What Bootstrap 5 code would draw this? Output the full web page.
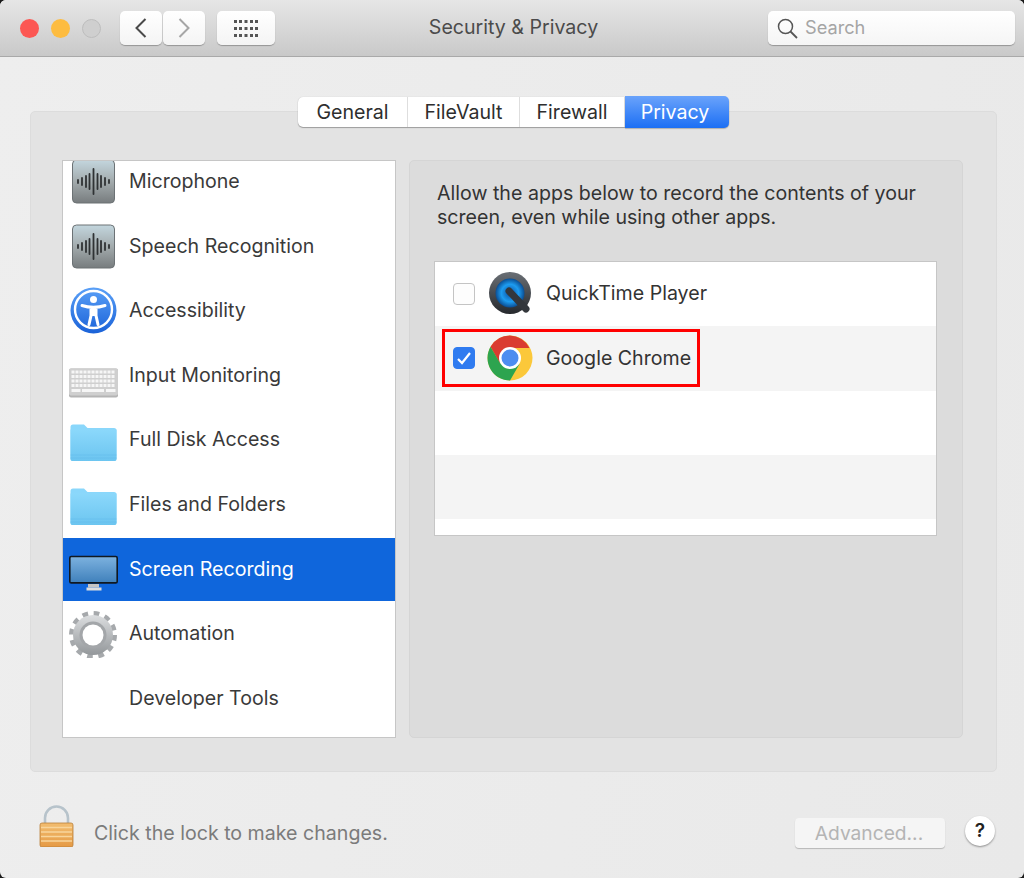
<!DOCTYPE html>
<html lang="en">
<head>
<meta charset="utf-8">
<title>Security &amp; Privacy</title>
<link href="https://cdn.jsdelivr.net/npm/bootstrap@5.3.0/dist/css/bootstrap.min.css" rel="stylesheet">
<style>
html,body{height:100%;}
body{background:#1a1a1a;font-family:Inter,"Liberation Sans",sans-serif;font-size:19.6px;color:#333;overflow:hidden;}
.win{width:1024px;height:878px;background:linear-gradient(100deg,#eeeeee,#e9e9e9);border-radius:6px;overflow:hidden;}
.tbar{height:57px;background:linear-gradient(#e6e6e6,#c9c9c9);border-bottom:1px solid #a9a9a9;padding:0 9px 0 20px;}
.light{width:19px;height:19px;border-radius:50%;}
.l-red{background:#fc5753;margin-right:12px;}
.l-yel{background:#fdbc40;margin-right:12px;}
.l-off{background:#cfcfcf;border:1px solid #bdbdbd;margin-right:19px;}
.tbtn{height:34px;background:linear-gradient(#fff,#f4f4f4);border:0;border-radius:5px;box-shadow:0 1px 1px rgba(0,0,0,.28);padding:0;}
.t-nav{width:42px;margin-right:1px;}
.t-grid{width:58px;margin-left:11px;}
.ttl{font-size:19.6px;color:#4b4b4b;padding-right:16px;}
.srch{width:247px;height:34px;background:linear-gradient(#fff,#f5f5f5);border-radius:5px;box-shadow:0 1px 1px rgba(0,0,0,.28);padding-left:9px;color:#a5a5a5;font-size:18.2px;gap:7px;}
.tabsw{margin-top:40px;margin-bottom:-16px;margin-left:3px;position:relative;z-index:2;}
.tabg{background:#fff;border-radius:5px;box-shadow:0 1px 1px rgba(0,0,0,.3),0 0 1px rgba(0,0,0,.2);height:30px;}
.tabb{height:30px;line-height:30px;padding:0;border-right:1px solid #dedede;color:#2e2e2e;text-align:center;}
.tb1{width:110px}.tb2{width:112px}.tb3{width:105px}
.tb4{width:104px;padding-right:4px;border:0;color:#fff;border-radius:0 5px 5px 0;background:linear-gradient(#6aa3fb,#1c6ff4);margin-top:-1px;height:32px;line-height:32px;box-shadow:0 1px 1px rgba(0,0,0,.2);}
.grp{margin:0 27px 0 30px;height:661px;background:#e3e3e3;border:1px solid #dcdcdc;border-radius:5px;padding:48px 33px 33px 31px;gap:13px;}
.plist{width:334px;background:#fff;border:1px solid #c6c6c6;overflow:hidden;flex:none;}
.prow{height:64.6px;border-top:1px solid #fff;border-bottom:1px solid #fff;padding-left:6px;gap:11px;color:#3a3a3a;flex:none;}
.prow:first-child{margin-top:-11.5px;}
.prow.sel{background:#0f66dc;color:#fff;}
.pico{width:49px;height:49px;flex:none;display:block;}
.rpane{width:553px;background:#dcdcdc;border:1px solid #d5d5d5;border-radius:5px;padding:20px 25px 0 24px;}
.rtxt{line-height:24px;margin:0 0 32px 3px;color:#333;}
.atbl{background:#fff;border:1px solid #c6c6c6;height:275px;overflow:hidden;}
.arow{height:64.3px;padding-left:7px;flex:none;}
.arow.alt{background:#f4f4f4;}
.plain{padding-left:11px;}
.hilite{border:3px solid #f00;height:58px;width:258px;padding:0 0 0 8px;}
.cbx{width:22px;height:22px;border-radius:4px;background:#fdfdfd;border:1px solid #c4c4c4;flex:none;margin-right:12px;}
.cbx.on{background:#2f7bf0;border-color:#2f7bf0;}
.aico{width:46px;height:46px;flex:none;margin-right:13px;}
.foot{padding:0 29px 0 38px;height:106px;}
.ftxt{color:#7b7b7b;margin-left:20px;margin-top:17px;}
.advb{width:150px;height:30px;background:#f5f5f5;border:0;border-radius:4px;box-shadow:0 1px 1px rgba(0,0,0,.22);color:#b4b4b4;margin-top:15px;padding:0 2px 0 0;font-size:19.2px;line-height:28px;}
.hbtn{width:30px;height:30px;border-radius:50%;background:#fff;border:0;box-shadow:0 1px 2px rgba(0,0,0,.4);margin-left:20px;margin-top:12px;padding:0;color:#222;font-weight:600;font-size:19px;line-height:30px;}
</style>
</head>
<body>
<svg width="0" height="0" class="position-absolute">
<defs>
<linearGradient id="gm" x1="0" y1="0" x2="0" y2="1"><stop offset="0" stop-color="#c3d6de"/><stop offset=".5" stop-color="#a3abad"/><stop offset="1" stop-color="#777c7e"/></linearGradient>
<linearGradient id="gf" x1="0" y1="0" x2="0" y2="1"><stop offset="0" stop-color="#8bd8fb"/><stop offset="1" stop-color="#6cc5f0"/></linearGradient>
<linearGradient id="gs" x1="0" y1="0" x2="0" y2="1"><stop offset="0" stop-color="#7db2df"/><stop offset="1" stop-color="#3f80bb"/></linearGradient>
<linearGradient id="ga" x1="0" y1="0" x2="0" y2="1"><stop offset="0" stop-color="#5aa0f7"/><stop offset="1" stop-color="#1a62d8"/></linearGradient>
<linearGradient id="gg" x1="0" y1="0" x2="0" y2="1"><stop offset="0" stop-color="#dcdee0"/><stop offset="1" stop-color="#93979a"/></linearGradient>
<linearGradient id="gl" x1="0" y1="0" x2="0" y2="1"><stop offset="0" stop-color="#f2bd70"/><stop offset="1" stop-color="#e59a45"/></linearGradient>
<symbol id="i-mic" viewBox="0 0 49 49">
<rect x="3.500" y="3" width="42" height="43" rx="4" fill="url(#gm)" stroke="#6c7275"/>
<path d="M9 23v3M13 21v7M17 19v11M20.500 17v15M24.500 12v25M28.500 17v15M32 19v11M36 21v7M40 23v3" stroke="#2f3234" stroke-width="1.800" stroke-linecap="round"/>
</symbol>
<symbol id="i-acc" viewBox="0 0 49 49">
<circle cx="24.500" cy="24.500" r="23" fill="url(#ga)"/>
<circle cx="24.500" cy="23.500" r="18.500" fill="none" stroke="#fff" stroke-width="2.400"/>
<circle cx="24.500" cy="13.500" r="3.500" fill="#fff"/>
<path d="M13 19.500c4 1.300 8 1.800 11.500 1.800s7.500-.5 11.500-1.800M22 21.500v8l-2 9M27 21.500v8l2 9" stroke="#fff" stroke-width="3" fill="none" stroke-linecap="round"/>
<path d="M22 21h5v9h-5z" fill="#fff"/>
</symbol>
<symbol id="i-key" viewBox="0 0 49 49">
<rect x="0" y="17.500" width="49" height="29" rx="2" fill="#b4b4b4"/>
<rect x="0" y="17.500" width="49" height="27" rx="2" fill="#cfcfcf"/>
<path d="M2.500 21h44M2.500 25.500h44M2.500 30h44M2.500 34.500h44" stroke="#f6f6f6" stroke-width="3" stroke-dasharray="3 1"/>
<path d="M2.500 39.500h9M13 39.500h22M37 39.500h9.500" stroke="#f6f6f6" stroke-width="3"/>
</symbol>
<symbol id="i-fold" viewBox="0 0 49 49">
<path d="M1.500 11a2.500 2.500 0 0 1 2.500-2.500h11l3.500 3.500H45a2.500 2.500 0 0 1 2.500 2.500V43a2 2 0 0 1-2 2h-42a2 2 0 0 1-2-2z" fill="#8ad7fb"/>
<path d="M1.500 13.500h46V43a2 2 0 0 1-2 2h-42a2 2 0 0 1-2-2z" fill="url(#gf)"/>
<path d="M1.500 39h46M1.500 42h46" stroke="#5fb8e6" stroke-opacity=".45"/>
</symbol>
<symbol id="i-mon" viewBox="0 0 49 49">
<rect x="0.800" y="11.500" width="47.400" height="26.400" rx="1.500" fill="url(#gs)" stroke="#101820" stroke-width="1.600"/>
<rect x="19" y="39" width="11" height="3.500" fill="#c5c5c5"/>
<rect x="17.500" y="42.500" width="15" height="3" fill="#dedede"/>
</symbol>
<symbol id="i-gear" viewBox="0 0 49 49">
<circle cx="24" cy="26" r="21.500" fill="none" stroke="#a6a9ac" stroke-width="5" stroke-dasharray="5.630 5.630"/>
<circle cx="24" cy="26" r="20" fill="url(#gg)"/>
<circle cx="24" cy="26" r="13.500" fill="#a3a6a9"/>
<circle cx="24" cy="26" r="10.500" fill="#fff"/>
</symbol>
</defs>
</svg>
<div class="win d-flex flex-column">
  <div class="tbar d-flex align-items-center">
    <span class="light l-red"></span><span class="light l-yel"></span><span class="light l-off"></span>
    <button class="tbtn t-nav d-flex align-items-center justify-content-center" type="button" aria-label="Back"><svg width="14" height="22" viewBox="0 0 14 22"><path d="M11.500 2 2.500 11l9 9" fill="none" stroke="#4a4a4a" stroke-width="2"/></svg></button>
    <button class="tbtn t-nav d-flex align-items-center justify-content-center" type="button" aria-label="Forward"><svg width="14" height="22" viewBox="0 0 14 22"><path d="M2.500 2l9 9-9 9" fill="none" stroke="#a6a6a6" stroke-width="2"/></svg></button>
    <button class="tbtn t-grid d-flex align-items-center justify-content-center" type="button" aria-label="Show all"><svg width="24" height="17" viewBox="0 0 24 17" fill="#555"><rect x="0" y="0" width="3" height="3"/><rect x="5" y="0" width="3" height="3"/><rect x="10.500" y="0" width="3" height="3"/><rect x="16" y="0" width="3" height="3"/><rect x="21" y="0" width="3" height="3"/><rect x="0" y="7" width="3" height="3"/><rect x="5" y="7" width="3" height="3"/><rect x="10.500" y="7" width="3" height="3"/><rect x="16" y="7" width="3" height="3"/><rect x="21" y="7" width="3" height="3"/><rect x="0" y="14" width="3" height="3"/><rect x="5" y="14" width="3" height="3"/><rect x="10.500" y="14" width="3" height="3"/><rect x="16" y="14" width="3" height="3"/><rect x="21" y="14" width="3" height="3"/></svg></button>
    <div class="ttl flex-grow-1 text-center">Security &amp; Privacy</div>
    <div class="srch d-flex align-items-center"><svg width="21" height="21" viewBox="0 0 21 21"><circle cx="8.500" cy="8.500" r="7" fill="none" stroke="#555" stroke-width="1.500"/><path d="M13.500 13.500 20 20" stroke="#555" stroke-width="1.800"/></svg><span>Search</span></div>
  </div>
  <div class="tabsw d-flex justify-content-center">
    <div class="tabg d-flex">
      <div class="tabb tb1">General</div><div class="tabb tb2">FileVault</div><div class="tabb tb3">Firewall</div><div class="tabb tb4">Privacy</div>
    </div>
  </div>
  <div class="grp d-flex">
    <div class="plist d-flex flex-column">
      <div class="prow d-flex align-items-center"><svg class="pico"><use href="#i-mic"/></svg><span>Microphone</span></div>
      <div class="prow d-flex align-items-center"><svg class="pico"><use href="#i-mic"/></svg><span>Speech Recognition</span></div>
      <div class="prow d-flex align-items-center"><svg class="pico"><use href="#i-acc"/></svg><span>Accessibility</span></div>
      <div class="prow d-flex align-items-center"><svg class="pico"><use href="#i-key"/></svg><span>Input Monitoring</span></div>
      <div class="prow d-flex align-items-center"><svg class="pico"><use href="#i-fold"/></svg><span>Full Disk Access</span></div>
      <div class="prow d-flex align-items-center"><svg class="pico"><use href="#i-fold"/></svg><span>Files and Folders</span></div>
      <div class="prow sel d-flex align-items-center"><svg class="pico"><use href="#i-mon"/></svg><span>Screen Recording</span></div>
      <div class="prow d-flex align-items-center"><svg class="pico"><use href="#i-gear"/></svg><span>Automation</span></div>
      <div class="prow d-flex align-items-center"><span class="pico"></span><span>Developer Tools</span></div>
    </div>
    <div class="rpane flex-grow-1">
      <p class="rtxt">Allow the apps below to record the contents of your screen, even while using other apps.</p>
      <div class="atbl d-flex flex-column">
        <div class="arow d-flex align-items-center"><div class="plain d-flex align-items-center"><span class="cbx"></span>
          <svg class="aico" viewBox="0 0 46 46"><defs><radialGradient id="gq"><stop offset="0" stop-color="#0a4fa0"/><stop offset=".6" stop-color="#1d9cf0"/><stop offset="1" stop-color="#0b4d92"/></radialGradient><linearGradient id="gd" x1="0" y1="0" x2="0" y2="1"><stop offset="0" stop-color="#6a6f75"/><stop offset="1" stop-color="#26292d"/></linearGradient></defs><circle cx="23" cy="22" r="21" fill="url(#gd)"/><circle cx="23" cy="22" r="14.500" fill="url(#gq)"/><path d="M22 20 39 38" stroke="#33373c" stroke-width="7" stroke-linecap="round"/></svg>
          <span>QuickTime Player</span></div></div>
        <div class="arow alt d-flex align-items-center"><div class="hilite d-flex align-items-center"><span class="cbx on d-flex align-items-center justify-content-center"><svg width="16" height="14" viewBox="0 0 16 14"><path d="M2 8l4 4 8-10" fill="none" stroke="#fff" stroke-width="2.200"/></svg></span>
          <svg class="aico" viewBox="0 0 46 46"><circle cx="23" cy="23" r="22.500" fill="#fbc83a"/><path d="M23 .5A22.500 22.500 0 0 0 3.500 11.800L13 28.500 23 13h19.500A22.500 22.500 0 0 0 23 .5z" fill="#da3c30"/><path d="M3.500 11.800A22.500 22.500 0 0 0 23 45.500L32.500 29 23 33 13 28z" fill="#2da44f"/><circle cx="23" cy="23" r="11" fill="#fff"/><circle cx="23" cy="23" r="8.500" fill="#4d8df0"/></svg>
          <span>Google Chrome</span></div></div>
        <div class="arow"></div>
        <div class="arow alt"></div>
      </div>
    </div>
  </div>
  <div class="foot d-flex align-items-center">
    <svg width="36" height="44" viewBox="0 0 36 44"><path d="M7 21V15a11.500 11.500 0 0 1 23 0v6" fill="none" stroke="#b7c3cb" stroke-width="2.600"/><rect x="2" y="20" width="33" height="24" rx="2" fill="url(#gl)" stroke="#b97f38" stroke-width=".8"/><path d="M3 24.500h31M3 29h31M3 33.500h31M3 38h31" stroke="#f8d59c" stroke-width="1.300"/></svg>
    <span class="ftxt flex-grow-1">Click the lock to make changes.</span>
    <button class="advb" type="button" disabled>Advanced...</button>
    <button class="hbtn" type="button">?</button>
  </div>
</div>
<script src="https://cdn.jsdelivr.net/npm/bootstrap@5.3.0/dist/js/bootstrap.bundle.min.js"></script>
</body>
</html>
